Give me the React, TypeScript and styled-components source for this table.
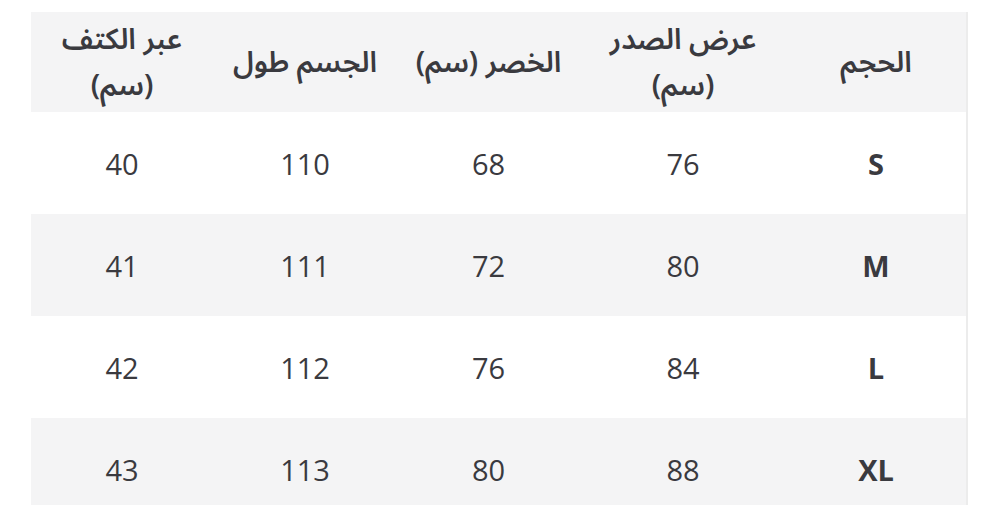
import React from "react";
import styled, { createGlobalStyle } from "styled-components";

const GlobalStyle = createGlobalStyle`
  html, body {
    margin: 0;
    padding: 0;
    background: #ffffff;
  }
  body {
    font-family: "Open Sans", "Noto Sans", "Noto Sans Arabic", "DejaVu Sans", sans-serif;
    color: #3a3a3f;
  }
`

const Page = styled.div`
  display: flex;
  padding: 12px 0 0 31px;
  height: 505px;
  box-sizing: border-box;
  overflow: hidden;
`

const Frame = styled.div`
  width: 935px;
  flex-shrink: 0;
  border-right: 2px solid #ececec;
`

const Table = styled.table`
  width: 935px;
  border-collapse: collapse;
  table-layout: fixed;
  direction: rtl;
`

const Row = styled.tr<{ $shaded?: boolean }>`
  background: ${({ $shaded }) => ($shaded ? "#f4f4f5" : "#ffffff")};
  height: 102px;
`

const HeadRow = styled(Row)`
  height: 100px;
`

const HeadCell = styled.th<{ $width: number }>`
  width: ${({ $width }) => $width}px;
  padding: 0;
  text-align: center;
  vertical-align: middle;
  font-family: "Noto Sans Arabic", "DejaVu Sans", "Open Sans", sans-serif;
  font-size: 29px;
  font-weight: 600;
  line-height: 45px;
  color: #3a3a3f;
`

const Line = styled.span`
  display: block;
  & + & {
    margin-top: 1px;
  }
`

const Cell = styled.td<{ $bold?: boolean }>`
  text-align: center;
  vertical-align: middle;
  font-size: 29px;
  font-weight: ${({ $bold }) => ($bold ? 700 : 400)};
  color: #3a3a3f;
  padding: 0;
`

const columns = [
  { lines: ["الحجم"], width: 180 },
  { lines: ["عرض الصدر", "(سم)"], width: 206 },
  { lines: ["الخصر (سم)"], width: 183 },
  { lines: ["الجسم طول"], width: 184 },
  { lines: ["عبر الكتف", "(سم)"], width: 182 },
];

const rows = [
  ["S", "76", "68", "110", "40"],
  ["M", "80", "72", "111", "41"],
  ["L", "84", "76", "112", "42"],
  ["XL", "88", "80", "113", "43"],
];

export default function App() {
  return (
    <>
      <GlobalStyle />
      <Page>
        <Frame>
          <Table>
            <thead>
              <HeadRow $shaded>
                {columns.map((c) => (
                  <HeadCell key={c.lines[0]} $width={c.width}>
                    {c.lines.map((l) => (
                      <Line key={l}>{l}</Line>
                    ))}
                  </HeadCell>
                ))}
              </HeadRow>
            </thead>
            <tbody>
              {rows.map((r, i) => (
                <Row key={r[0]} $shaded={i % 2 === 1}>
                  {r.map((v, j) => (
                    <Cell key={j} $bold={j === 0}>
                      {v}
                    </Cell>
                  ))}
                </Row>
              ))}
            </tbody>
          </Table>
        </Frame>
      </Page>
    </>
  );
}
